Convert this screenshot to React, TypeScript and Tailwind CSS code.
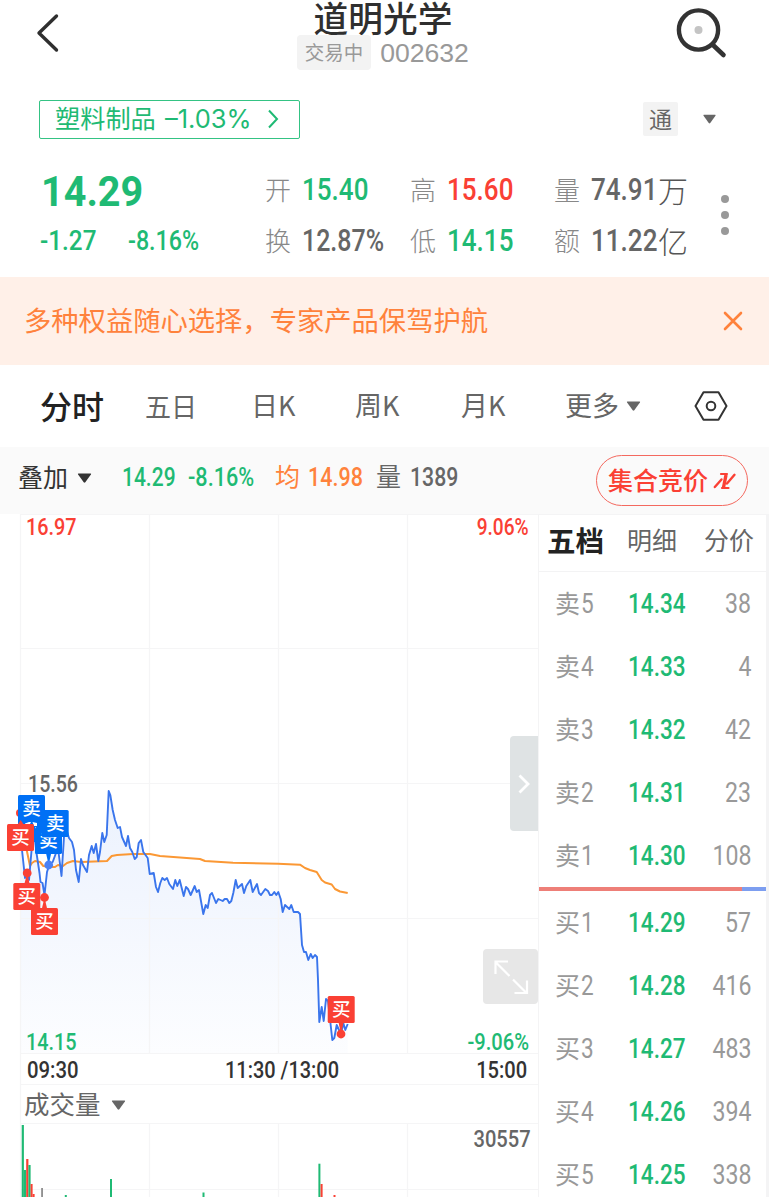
import React from 'react';
import clsx from 'clsx';

interface NumProps {
  children: React.ReactNode;
  className?: string;
}

// Figures are set in a narrowed Roboto
const Num: React.FC<NumProps> = ({ children, className }) => (
  <span
    className={clsx(
      "inline-block whitespace-nowrap font-['Roboto',sans-serif]",
      className
    )}
  >
    {children}
  </span>
);

const Caret: React.FC<{ className?: string }> = ({ className }) => (
  <svg viewBox="0 0 14 10" className={className} fill="currentColor">
    <path d="M1 0.5h12q1 0 .4 .9L7.8 9.3q-.8 .9-1.6 0L.6 1.4Q0 .5 1 .5z" />
  </svg>
);

const stats = [
  [
    { label: '开', value: '15.40', unit: '', color: 'text-[#1fba74] scale-x-[0.84]', width: 'w-[145px]' },
    { label: '高', value: '15.60', unit: '', color: 'text-[#fa4034] scale-x-[0.84]', width: 'w-[144px]' },
    { label: '量', value: '74.91', unit: '万', color: 'text-[#666666] scale-x-[0.84]', width: 'w-[140px]' }
  ],
  [
    { label: '换', value: '12.87%', unit: '', color: 'text-[#666666] scale-x-[0.805]', width: 'w-[145px]' },
    { label: '低', value: '14.15', unit: '', color: 'text-[#1fba74] scale-x-[0.84]', width: 'w-[144px]' },
    { label: '额', value: '11.22', unit: '亿', color: 'text-[#666666] scale-x-[0.84]', width: 'w-[140px]' }
  ]
];

const sells = [
  { label: '卖', level: 5, price: '14.34', volume: 38 },
  { label: '卖', level: 4, price: '14.33', volume: 4 },
  { label: '卖', level: 3, price: '14.32', volume: 42 },
  { label: '卖', level: 2, price: '14.31', volume: 23 },
  { label: '卖', level: 1, price: '14.30', volume: 108 }
];

const buys = [
  { label: '买', level: 1, price: '14.29', volume: 57 },
  { label: '买', level: 2, price: '14.28', volume: 416 },
  { label: '买', level: 3, price: '14.27', volume: 483 },
  { label: '买', level: 4, price: '14.26', volume: 394 },
  { label: '买', level: 5, price: '14.25', volume: 338 }
];

const pricePoints =
  '20,299 22,336 25,364 27,359 29,366 32,331 34,318 36.5,339 39.5,359 40.5,368 42.5,369 44.5,381 47,358 49.5,350 52.7,348 56,339 58,334 61.5,362 64,323 66.5,316 69,324 72,328 74,336 76,356 78.7,368 81,345 83,351 87,358 89,341 91.7,332 93.7,339 96,330 98.3,347 100,338 102.3,319 104.3,328 106.7,321 108.7,277 110.3,281 112.7,296 115,306 117.7,314 120,313 122,323 126,332 128,322 130,334 132.3,338 134.7,345 136.7,343 138.7,329 141,326 143.3,338 147.7,344 149.7,360 153.7,359 156,373 158,378 160.3,369 162.3,364 164.7,366 167,364 169.3,370 173,375 175.3,366 177.3,372 179.7,366 183.7,382 186,373 188,375 190.7,381 194.7,372 196.7,378 199,376 203.3,400 205.7,391 207.7,394 210,381 212,379 216,389 218.3,385 222.7,387 224.7,385 227,385 229.3,389 231.3,387 233.3,379 235.7,366 237.7,374 242,370 244,379 246.3,372 250.3,366 252.7,378 257,370 259,379 261,381 265.3,375 268,377 270,381 272,381 274.3,378 276.3,381 278.3,378 280.7,385 282.7,398 285,391 289.3,395 291.3,391 293.7,398 298,398 300,400 302,431 304,438 306,438 308.3,446 310.7,440 312.7,444 315,441 317,443 318,466 319.3,508 321.7,493 323.7,507 326,485 328,487 330,505 332.3,526 334.3,524 336.7,511 339,516 341,520 343.3,509 345.3,516 347.7,510';

const averagePoints =
  '20,299 26.7,336 30,352 32,349 35,347 40,348 43.3,352 50,353 55,353 58,351 63,352 67,349 73,347 81,348 107,347 111.7,342 117,341 133,340 150,340 160,342 200,345 205,347 233,348.7 278,349.7 300,350.7 305,354 310,356 316.7,358 321.7,366 325,368.5 331.7,370.5 335,375 340,377.5 347.7,379';

const volumeBars = [
  { x: 21.7, y: 611, w: 2.2, color: '#1fba74' },
  { x: 24, y: 656, w: 2.2, color: '#1fba74' },
  { x: 26.2, y: 645, w: 2.2, color: '#fa4034' },
  { x: 28.4, y: 651, w: 2.2, color: '#1fba74' },
  { x: 30.6, y: 670, w: 2, color: '#fa4034' },
  { x: 32.6, y: 680, w: 2, color: '#fa4034' },
  { x: 41.3, y: 674, w: 1.5, color: '#777777' },
  { x: 64.8, y: 681, w: 2, color: '#1fba74' },
  { x: 110, y: 665, w: 2, color: '#1fba74' },
  { x: 202.5, y: 678.5, w: 2, color: '#1fba74' },
  { x: 318.4, y: 649.7, w: 2, color: '#1fba74' },
  { x: 320.6, y: 670, w: 2, color: '#fa4034' },
  { x: 333.5, y: 681, w: 2, color: '#fa4034' }
];

const trades = [
  { side: '卖', x: 35, y: 313, dotX: 48.7, dotY: 351 },
  { side: '卖', x: 18, y: 281, dotX: 0, dotY: 0 },
  { side: '卖', x: 41.7, y: 296, dotX: 0, dotY: 0 },
  { side: '买', x: 7, y: 310, dotX: 0, dotY: 0 },
  { side: '买', x: 13.3, y: 369, dotX: 27.2, dotY: 359 },
  { side: '买', x: 31, y: 394, dotX: 44.5, dotY: 383.5 },
  { side: '买', x: 327.7, y: 482, dotX: 341, dotY: 520 }
];

const Header: React.FC = () => (
  <header className="flex h-[88px] items-start justify-between">
    <button className="ml-[36px] mt-[13px]">
      <svg width="24" height="40" viewBox="0 0 24 40" fill="none" stroke="#2f2f2f" strokeWidth="3.4" strokeLinecap="round" strokeLinejoin="round">
        <path d="M20.5 3L3 20l17.5 17" />
      </svg>
    </button>
    <div className="ml-[31px] flex flex-col items-center">
      <h1 className="h-[35px] text-[34.7px] font-medium leading-[35px] text-[#2f2f2f]">道明光学</h1>
      <div className="flex h-[35px] items-center gap-[9px]">
        <span className="flex h-[35px] w-[74px] items-center justify-center rounded-[4px] bg-[#f3f3f3] pb-[2px] text-[19.5px] leading-[30px] text-[#999999]">
          交易中
        </span>
        <span className="pt-[1px] font-['Liberation_Sans',sans-serif] text-[26.6px] leading-[32px] text-[#999999]">002632</span>
      </div>
    </div>
    <button className="mr-[42px] mt-[6px]">
      <svg width="52" height="54" viewBox="0 0 52 54" fill="none">
        <circle cx="23.5" cy="24" r="19.6" stroke="#333333" strokeWidth="4.4" />
        <path d="M38 39l10.5 10" stroke="#333333" strokeWidth="4.6" strokeLinecap="round" />
        <circle cx="23.5" cy="24" r="4" fill="#c4c4c4" />
      </svg>
    </button>
  </header>
);

const Quote: React.FC = () => (
  <section className="h-[189px]">
    <div className="flex h-[62px] items-center pl-[39px]">
      <button className="flex h-[39px] w-[261px] items-center whitespace-nowrap rounded-[2px] border-[1.5px] border-[#34c384] pl-[15px] text-[25.2px] text-[#1fba74]">
        <span className="pb-[2px]">塑料制品</span>
        <span className="ml-[9px] w-[87px] pt-[1px] font-['Inter',sans-serif] text-[25.5px]">–1.03%</span>
        <svg className="ml-[16px]" width="11" height="20" viewBox="0 0 11 20" fill="none" stroke="currentColor" strokeWidth="2">
          <path d="M1 1.5L9 10l-8 8.5" />
        </svg>
      </button>
      <span className="ml-[343px] flex h-[34px] w-[35px] items-center justify-center rounded-[2px] bg-[#f3f3f3] pb-[2px] text-[23px] leading-[30px] text-[#666666]">
        通
      </span>
      <Caret className="ml-[25px] h-[10px] w-[13px] text-[#666666]" />
    </div>
    <div className="flex pt-[14px]">
      <div className="w-[265px] pl-[40px] text-[#1fba74]">
        <div className="h-[52px] pl-[1px] leading-[54px]">
          <Num className="origin-left scale-x-[0.92] text-[43px] font-bold">14.29</Num>
        </div>
        <div className="flex h-[50px] items-center pt-[1px] text-[27px] font-medium">
          <Num className="w-[88px] origin-left scale-x-[0.9]">-1.27</Num>
          <Num className="origin-left scale-x-[0.86]">-8.16%</Num>
        </div>
      </div>
      <div>
        {stats.map((row, index) => (
          <div key={index} className="flex h-[51px] items-center">
            {row.map((item) => (
              <div key={item.label} className={clsx('flex items-center whitespace-nowrap', item.width)}>
                <span className="w-[37px] pb-[2px] text-[26px] font-light text-[#888888]">{item.label}</span>
                <Num className={clsx('w-[67px] origin-left pt-[2px] text-[31px] font-medium', item.color)}>
                  {item.value}
                </Num>
                <span className="pb-[1px] text-[30px] font-light text-[#555555]">{item.unit}</span>
              </div>
            ))}
          </div>
        ))}
      </div>
      <div className="ml-[27px] mt-[31px] flex flex-col gap-2">
        <i className="h-2 w-2 rounded-full bg-[#999999]" />
        <i className="h-2 w-2 rounded-full bg-[#999999]" />
        <i className="h-2 w-2 rounded-full bg-[#999999]" />
      </div>
    </div>
  </section>
);

const Banner: React.FC = () => (
  <div className="flex h-[88px] items-center justify-between bg-[#fff0e8] pl-[24px] pr-[26px] text-[27.3px] text-[#ff823c]">
    <span className="pb-[3px]">多种权益随心选择，专家产品保驾护航</span>
    <svg width="20" height="20" viewBox="0 0 20 20" stroke="currentColor" strokeWidth="2.6" strokeLinecap="round">
      <path d="M2 2l16 16M18 2L2 18" />
    </svg>
  </div>
);

const PeriodTabs: React.FC = () => (
  <nav className="flex h-[82px] items-center whitespace-nowrap pl-[40px] text-[26px] text-[#666666]">
    <span className="w-[105px] pb-[3px] text-[32px] font-medium text-[#222222]">分时</span>
    <span className="w-[106px] pb-[2px]">五日</span>
    <span className="w-[104px] pb-[2px] text-[27px]">日K</span>
    <span className="w-[106px] pb-[2px] text-[27px]">周K</span>
    <span className="w-[104px] pb-[2px] text-[27px]">月K</span>
    <span className="w-[61px] pb-[1px] text-[27px]">更多</span>
    <Caret className="h-[10px] w-[15px]" />
    <svg className="ml-[53px]" width="34" height="30" viewBox="0 0 34 30" fill="none" stroke="#333333" strokeWidth="2" strokeLinejoin="round">
      <path d="M9.5 1.3h15L32.5 15l-8 13.7h-15L1.5 15z" />
      <circle cx="17" cy="15" r="4.3" />
    </svg>
  </nav>
);

const Summary: React.FC = () => (
  <div className="flex h-[67px] items-center whitespace-nowrap bg-[#fafafa] pb-[6px] pl-[18px] text-[25px]">
    <span className="w-[59px] pb-[2px] text-[#333333]">叠加</span>
    <Caret className="h-[10px] w-[15px] text-[#333333]" />
    <Num className="ml-[30px] w-[66px] origin-left scale-x-[0.84] font-medium text-[#1fba74]">14.29</Num>
    <Num className="w-[87px] origin-left scale-x-[0.865] font-medium text-[#1fba74]">-8.16%</Num>
    <span className="w-[33px] pb-[3px] text-[#ff823c]">均</span>
    <Num className="w-[68px] origin-left scale-x-[0.86] font-medium text-[#ff823c]">14.98</Num>
    <span className="w-[34px] pb-[3px] text-[#666666]">量</span>
    <Num className="w-[186px] origin-left scale-x-[0.85] font-medium text-[#666666]">1389</Num>
    <button className="mt-[6px] flex h-[51px] w-[152px] shrink-0 items-center rounded-full border border-[#f4695f] pl-[11px] font-medium text-[#fa4034]">
      <span className="pb-[2px]">集合竞价</span>
      <svg className="ml-[5px]" width="24" height="20" viewBox="0 0 24 20" fill="none" stroke="currentColor" strokeLinecap="round">
        <path d="M1.800 16L8.500 8.500M21.500 3.800L14 12.500" strokeWidth="2.4" />
        <path d="M8 3h6M9 17h6.500" strokeWidth="2.2" />
        <path d="M13 4L10.500 16.500" strokeWidth="3.4" strokeLinecap="butt" />
      </svg>
    </button>
  </div>
);

const Chart: React.FC = () => (
  <div className="relative h-[683px] w-[538px] shrink-0 overflow-hidden">
    <svg className="block" width="538" height="683" viewBox="0 0 538 683">
      <defs>
        <linearGradient id="area" x1="0" y1="277" x2="0" y2="539" gradientUnits="userSpaceOnUse">
          <stop offset="0" stopColor="#3a78f0" stopOpacity="0.1" />
          <stop offset="1" stopColor="#3a78f0" stopOpacity="0.015" />
        </linearGradient>
      </defs>
      <polygon points={`20,539 ${pricePoints} 347.7,539`} fill="url(#area)" />
      <g stroke="#f5f5f6" strokeWidth="1.2">
        <path d="M20 .5H538M20 134.500H538M20 269.500H538M20 404.500H538M20 539.500H538M20 570.500H538M20 609.500H538M20 675.500H538" />
        <path d="M20.500 0V683M149.500 0V539M278.500 0V539M407.500 0V539M149.500 610V683M278.500 610V683M407.500 610V683" />
      </g>
      {volumeBars.map((bar) => (
        <rect key={bar.x} x={bar.x} y={bar.y} width={bar.w} height={683 - bar.y} fill={bar.color} />
      ))}
      <polyline points={averagePoints} fill="none" stroke="#fb9834" strokeWidth="2" strokeLinejoin="round" />
      <polyline points={pricePoints} fill="none" stroke="#3a75ec" strokeWidth="1.9" strokeLinejoin="round" />
      <circle cx="20" cy="299" r="4" fill="#fa4034" />
      {/* Sliver of an older sell tag under the stack */}
      <path d="M18 305h24v8h-7v15h-17z" fill="#0070f5" />
      <path d="M25 309.500l4-1.500h2l-2 4h-4zM32.500 308l4.500 1v3h-3z" fill="#ffffff" />
      {trades.map((trade, index) => {
        const fill = trade.side === '卖' ? '#0070f5' : '#fa4034';
        return (
          <g key={index}>
            {trade.dotX > 0 && (
              <>
                <path
                  d={`M${trade.dotX} ${trade.dotY}L${trade.x + 8} ${trade.y + 13}h11z`}
                  fill={fill}
                />
                <circle cx={trade.dotX} cy={trade.dotY} r="4.4" fill={trade.side === '卖' ? '#4c82f5' : fill} />
              </>
            )}
            <rect x={trade.x} y={trade.y} width="27" height="27" rx="1.5" fill={fill} />
            <text x={trade.x + 13.5} y={trade.y + 20.3} fontSize="18.500" fontWeight="500" textAnchor="middle" fill="#ffffff">
              {trade.side}
            </text>
          </g>
        );
      })}
      <path d="M17.500 311l3.200-5 3.200 5z" fill="#fa4034" />
    </svg>

    {/* Axis labels */}
    <div className="absolute inset-x-0 top-0 flex justify-between pl-[26px] pr-[9px] text-[24.500px] font-medium leading-[26px] text-[#fa4034]">
      <Num className="origin-left scale-x-[0.81]">16.97</Num>
      <Num className="origin-right scale-x-[0.78]">9.06%</Num>
    </div>
    <Num className="absolute left-[28px] top-[257px] origin-left scale-x-[0.8] text-[24.500px] font-medium leading-[26px] text-[#666666]">15.56</Num>
    <div className="absolute inset-x-0 top-[515px] flex justify-between pl-[26px] pr-[9px] text-[24.500px] font-medium leading-[26px] text-[#1fba74]">
      <Num className="origin-left scale-x-[0.81]">14.15</Num>
      <Num className="origin-right scale-x-[0.82]">-9.06%</Num>
    </div>
    <div className="absolute inset-x-0 top-[543px] flex pl-[27px] pr-[11px] text-[24.500px] font-medium leading-[26px] text-[#333333]">
      <Num className="w-[198px] origin-left scale-x-[0.83]">09:30</Num>
      <Num className="w-[200px] origin-left scale-x-[0.815]">11:30 /13:00</Num>
      <Num className="ml-auto origin-right scale-x-[0.82]">15:00</Num>
    </div>
    <div className="absolute left-[24px] top-[571px] flex h-[39px] items-center gap-[10px] text-[25.500px] text-[#666666]">
      <span className="pb-[2px]">成交量</span>
      <Caret className="h-[10px] w-[15px]" />
    </div>
    <Num className="absolute right-[7px] top-[612px] origin-right scale-x-[0.82] text-[24.500px] font-medium leading-[26px] text-[#666666]">30557</Num>

    <button className="absolute right-0 top-[222px] flex h-[95px] w-[28px] items-center justify-center rounded-l-[4px] bg-[#dfe3e4]">
      <svg width="12" height="20" viewBox="0 0 12 20" fill="none" stroke="#ffffff" strokeWidth="2.8">
        <path d="M1.500 1.500L10 10l-8.500 8.500" />
      </svg>
    </button>
    <button className="absolute right-0 top-[435px] flex h-[55px] w-[55px] items-center justify-center rounded-[4px] bg-[#e7e7e7]">
      <svg width="36" height="36" viewBox="0 0 36 36" fill="none" stroke="#ffffff" strokeWidth="2.2">
        <path d="M16.500 17L2.500 3M2.500 15V2.500H15M20 20.500L33 33.500M21.500 34H34V21.500" />
      </svg>
    </button>
  </div>
);

const DepthRow: React.FC<{ row: (typeof sells)[number] }> = ({ row }) => (
  <div className="flex h-[63px] items-center pl-[16px] pr-[15px] text-[27.500px] text-[#999999]">
    <span className="flex w-[73px] items-center">
      <span className="w-[26px] pb-[2px] text-[25px]">{row.label}</span>
      <Num className="origin-left scale-x-[0.82] pt-[1px]">{row.level}</Num>
    </span>
    <Num className="origin-left scale-x-[0.82] pt-[1px] font-medium text-[#1fba74]">{row.price}</Num>
    <Num className="ml-auto origin-right scale-x-[0.84] pt-[1px]">{row.volume}</Num>
  </div>
);

const Depth: React.FC = () => (
  <aside className="w-[231px] border-l border-r-[3px] border-t border-[#f4f4f5]">
    <div className="flex h-[57px] items-center whitespace-nowrap border-b border-[#f3f3f4] pb-[6px] pl-[8px] text-[25px] text-[#666666]">
      <span className="w-[80px] text-[28.500px] font-bold text-[#222222]">五档</span>
      <span className="w-[77px]">明细</span>
      <span>分价</span>
    </div>
    {sells.map((row) => (
      <DepthRow key={row.level} row={row} />
    ))}
    <div className="flex h-[4px]">
      <div className="w-[203px] bg-[#ee7f78]" />
      <div className="flex-1 bg-[#7d9ef0]" />
    </div>
    {buys.map((row) => (
      <DepthRow key={row.level} row={row} />
    ))}
  </aside>
);

const App: React.FC = () => (
  <div className="h-[1197px] w-[769px] overflow-hidden bg-white font-['Noto_Sans_CJK_SC',sans-serif]">
    <Header />
    <Quote />
    <Banner />
    <PeriodTabs />
    <Summary />
    <main className="flex">
      <Chart />
      <Depth />
    </main>
  </div>
);

export default App;
